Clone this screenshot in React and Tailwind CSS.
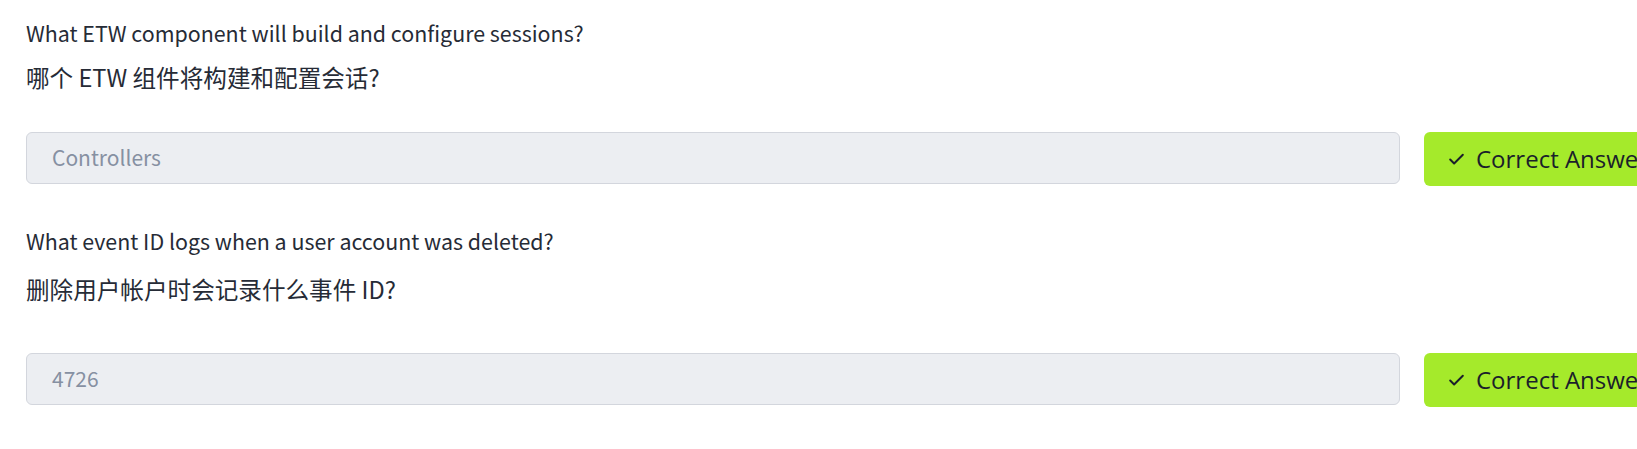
import { Check } from 'lucide-react'

const items = [
  {
    en: 'What ETW component will build and configure sessions?',
    zh: '哪个 ETW 组件将构建和配置会话?',
    answer: 'Controllers',
    zhGap: 'mt-[14px]',
    rowGap: 'mt-[39px]',
  },
  {
    en: 'What event ID logs when a user account was deleted?',
    zh: '删除用户帐户时会记录什么事件 ID?',
    answer: '4726',
    zhGap: 'mt-[18px]',
    rowGap: 'mt-[48px]',
  },
]

const sans = { fontFamily: '"Noto Sans CJK SC", "Noto Sans", sans-serif' }

function Question({ q }) {
  return (
    <div className="flex flex-col">
      <p className="text-[21.4px] leading-[28px] text-[#262b36]" style={sans}>{q.en}</p>
      <p className={`${q.zhGap} text-[23.6px] leading-[32px] text-[#262b36]`} style={sans}>{q.zh}</p>
      <div className={`${q.rowGap} flex items-start gap-[24px]`}>
        <div
          className="flex h-[52px] w-[1374px] shrink-0 items-center rounded-[6px] border border-[#d3d6dd] bg-[#eceef2] px-[25px] text-[21px] text-[#8690a2]"
          style={sans}
        >
          {q.answer}
        </div>
        <button
          className="flex h-[54px] shrink-0 items-center gap-[10px] whitespace-nowrap rounded-[6px] bg-[#a5ea2b] pl-[23px] pr-[30px] text-[24px] text-[#1b1f2a]"
          style={{ fontFamily: '"Open Sans", "Noto Sans", sans-serif' }}
        >
          <Check size={19} strokeWidth={2.5} />
          Correct Answer
        </button>
      </div>
    </div>
  )
}

export default function App() {
  return (
    <div className="h-[449px] w-[1637px] overflow-hidden bg-white pl-[26px] pt-[19px]">
      <div className="flex flex-col gap-[41px]">
        {items.map((q) => (
          <Question key={q.answer} q={q} />
        ))}
      </div>
    </div>
  )
}
